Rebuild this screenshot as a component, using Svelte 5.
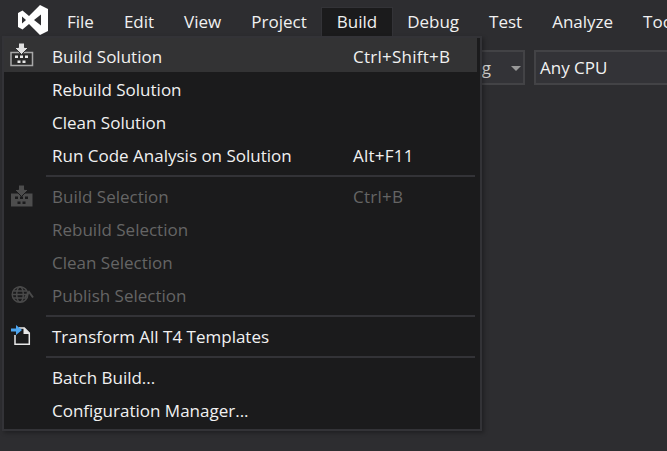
<script>
  const menus = ["File", "Edit", "View", "Project", "Build", "Debug", "Test", "Analyze", "Tools"];

  const groups = [
    [
      { label: "Build Solution", keys: "Ctrl+Shift+B", icon: "build", hover: true },
      { label: "Rebuild Solution" },
      { label: "Clean Solution" },
      { label: "Run Code Analysis on Solution", keys: "Alt+F11" },
    ],
    [
      { label: "Build Selection", keys: "Ctrl+B", icon: "build-off", off: true },
      { label: "Rebuild Selection", off: true },
      { label: "Clean Selection", off: true },
      { label: "Publish Selection", icon: "globe", off: true },
    ],
    [{ label: "Transform All T4 Templates", icon: "t4" }],
    [{ label: "Batch Build..." }, { label: "Configuration Manager..." }],
  ];
</script>

<div class="ide">
  <header class="menubar">
    <svg class="logo" viewBox="0 0 32 32" width="32" height="32">
      <path fill="#fff" fill-rule="evenodd" d="M23 1 L31 5 V27 L23 31 L12 20 L5.500 25.500 L1 23 V9 L5.500 6.500 L12 12 Z M24 10.500 L17 16 L24 21.500 Z M5 12.500 V19.500 L9 16 Z" />
    </svg>
    <nav class="items">
      {#each menus as m}
        <span class="item" class:open={m === "Build"}>{m}</span>
      {/each}
    </nav>
  </header>

  <div class="toolbar">
    <div class="combo config">
      <span class="value">Debug</span>
      <span class="caret"></span>
    </div>
    <div class="combo platform">Any CPU</div>
  </div>

  <div class="menu">
    {#each groups as group, i}
      {#if i > 0}<div class="sep"></div>{/if}
      {#each group as row}
        <div class="row" class:hover={row.hover} class:off={row.off}>
          <span class="icon">
            {#if row.icon === "build"}
              <svg viewBox="0 0 24 24" width="24" height="24">
                <path fill="#2b2b2b" stroke="#a8a8a8" stroke-width="1.500" d="M1 9.500h21.500v13H1z" />
                <path fill="#e0e0e0" stroke="#333334" d="M8.500 0h6v4.500h4l-7 7-7-7h4z" />
                <path fill="#e8e8e8" d="M5 12.500h3V15H5zM10 12.500h3V15h-3zM15 12.500h3V15h-3zM7.500 17.500h3V20h-3zM12.500 17.500h3V20h-3z" />
              </svg>
            {:else if row.icon === "build-off"}
              <svg viewBox="0 0 24 24" width="24" height="24">
                <path fill="#4d4d4d" d="M1 8.500h21.500v13H1z" />
                <path fill="#4d4d4d" stroke="#1b1b1c" d="M8.500 0h6v4.500h4l-7 7-7-7h4z" />
                <path fill="#1b1b1c" d="M5 11.500h3V14H5zM10 11.500h3V14h-3zM15 11.500h3V14h-3zM7.500 16.500h3V19h-3zM12.500 16.500h3V19h-3z" />
              </svg>
            {:else if row.icon === "globe"}
              <svg viewBox="0 0 24 24" width="24" height="24" fill="none" stroke="#4a4a4a" stroke-width="1.500">
                <circle cx="10" cy="10.500" r="7.800" />
                <ellipse cx="10" cy="10.500" rx="3.300" ry="7.800" />
                <path d="M2.500 10.500h15M3.500 7h13M3.500 14h13" />
                <path stroke-width="2" d="M15 13.500l4-5.500 4 5.500" />
              </svg>
            {:else if row.icon === "t4"}
              <svg viewBox="0 0 24 24" width="24" height="24">
                <path fill="none" stroke="#e8e8e8" stroke-width="1.500" d="M5 10v9.200h14.300V8l-5-5H9" />
                <path fill="#e8e8e8" d="M13.500 2.500l6.500 6.500h-6.500z" />
                <path fill="#4da6f0" d="M1 3.500h5V0l6 5-6 5V6.500H1z" />
              </svg>
            {/if}
          </span>
          <span class="label">{row.label}</span>
          {#if row.keys}<span class="keys">{row.keys}</span>{/if}
        </div>
      {/each}
    {/each}
  </div>
</div>

<style>
  :global(body) {
    background: #2d2d30;
  }

  .ide {
    position: relative;
    width: 667px;
    height: 451px;
    overflow: hidden;
    background: #2d2d30;
    color: #f1f1f1;
    font-family: "Open Sans", "Noto Sans", sans-serif;
    font-size: 17px;
  }

  .menubar {
    display: flex;
    align-items: flex-start;
    height: 38px;
    padding-left: 17px;
  }

  .logo {
    margin-top: 4px;
    flex: none;
  }

  .items {
    display: flex;
    margin-left: 3px;
    padding-top: 8px;
  }

  .item {
    height: 28px;
    line-height: 28px;
    padding: 0 15px;
    white-space: nowrap;
  }

  .item.open {
    background: #1b1b1c;
    box-shadow: 0 0 0 1px #333337;
  }

  .toolbar {
    display: flex;
    gap: 9px;
    padding: 12px 0 0 300px;
  }

  .combo {
    flex: none;
    height: 35px;
    box-sizing: border-box;
    border: 2px solid #434346;
    background: #333337;
    line-height: 31px;
    padding-left: 4px;
  }

  .config {
    position: relative;
    width: 225px;
    overflow: hidden;
  }

  .value {
    position: absolute;
    left: 137px;
    color: #d0d0d0;
  }

  .platform {
    width: 200px;
  }

  .caret {
    position: absolute;
    right: 2px;
    top: 14px;
    border: 5px solid transparent;
    border-top: 5px solid #999;
  }

  .menu {
    position: absolute;
    left: 2px;
    top: 36px;
    width: 480px;
    height: 395px;
    box-sizing: border-box;
    border: 2px solid #333337;
    background: #1b1b1c;
    padding: 0 3px 0 0;
    box-shadow: 2px 2px 4px rgba(0, 0, 0, 0.3);
  }

  .row {
    display: flex;
    align-items: center;
    height: 33px;
  }

  .row.hover {
    box-sizing: border-box;
    height: 34px;
    padding-top: 3px;
    margin-bottom: 1px;
    background: #333334;
  }

  .row.off {
    color: #656565;
  }

  .icon {
    display: flex;
    width: 48px;
    flex: none;
    padding-left: 6px;
    box-sizing: border-box;
  }

  .row.hover .icon {
    margin-top: -3px;
  }

  .label {
    flex: none;
    width: 301px;
    white-space: nowrap;
  }

  .keys {
    white-space: nowrap;
    letter-spacing: 0.25px;
  }

  .sep {
    height: 2px;
    margin: 3px 2px 3px 42px;
    background: #333337;
  }
</style>
